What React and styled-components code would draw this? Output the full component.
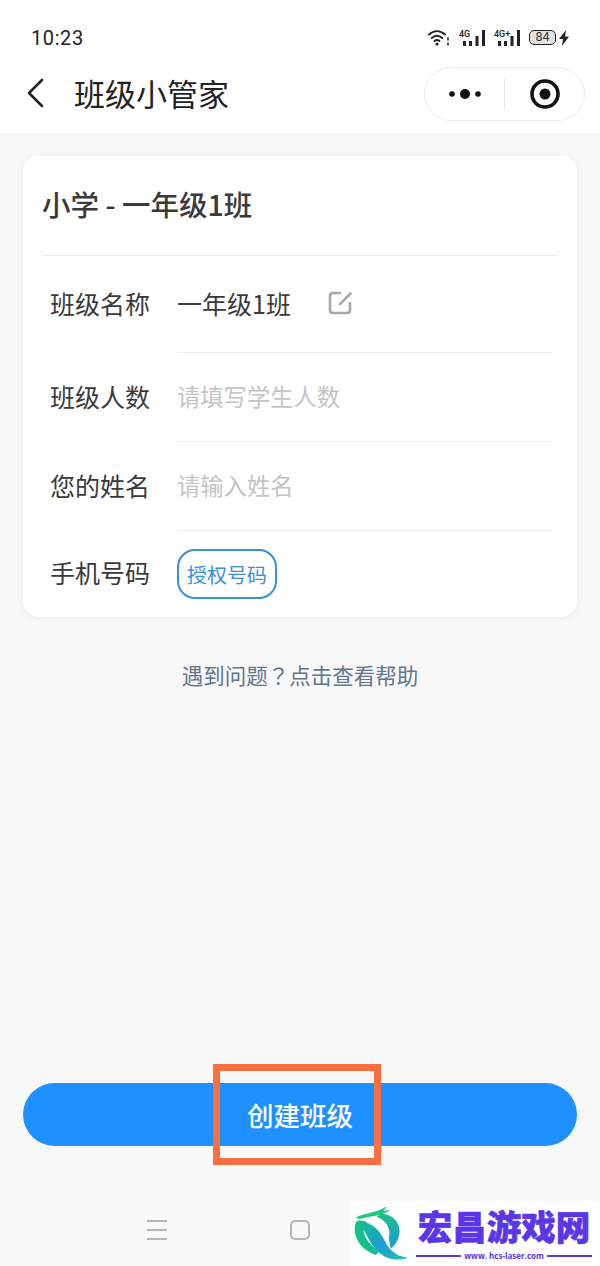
import React from 'react'
import styled, { createGlobalStyle } from 'styled-components'

const CJK = `'Noto Sans CJK SC', 'Noto Sans', sans-serif`

const Global = createGlobalStyle`
  html, body { margin: 0; padding: 0; background: #f8f8f8; }
  * { box-sizing: border-box; }
  body { font-family: ${CJK}; }
`

const Page = styled.div`
  position: relative;
  width: 600px;
  height: 1266px;
  display: flex;
  flex-direction: column;
  background: #f8f8f8;
  overflow: hidden;
`

const Header = styled.header`
  background: #fff;
  height: 133px;
  display: flex;
  flex-direction: column;
`

const StatusBar = styled.div`
  height: 54px;
  padding: 21px 30px 0 31px;
  display: flex;
  align-items: center;
  justify-content: space-between;
`

const Time = styled.span`
  font-family: Roboto, sans-serif;
  font-size: 20px;
  letter-spacing: 0.6px;
  color: #222;
`

const StatusIcons = styled.div`
  display: flex;
  align-items: center;
  gap: 9px;
`

const Signal = styled.div`
  position: relative;
  width: 26px;
  height: 16px;
`

const SignalLabel = styled.span`
  position: absolute;
  left: 0;
  top: 0;
  font-family: Roboto, sans-serif;
  font-size: 9px;
  line-height: 8px;
  font-weight: 500;
  color: #222;
`

const Battery = styled.div`
  display: flex;
  align-items: center;
  gap: 2px;
`

const BatteryBody = styled.div`
  width: 27px;
  height: 15px;
  border: 1.5px solid #222;
  border-radius: 5px;
  background: #e2e2e2;
  font-family: Roboto, sans-serif;
  font-size: 12.5px;
  line-height: 12px;
  color: #333;
  text-align: center;
`

const NavBar = styled.div`
  flex: 1;
  padding: 0 15px 0 24px;
  display: flex;
  align-items: center;
  justify-content: space-between;
`

const NavLeft = styled.div`
  display: flex;
  align-items: center;
  gap: 25px;
  padding-bottom: 2px;
`

const NavTitle = styled.h1`
  margin: 0;
  font-size: 31px;
  font-weight: 400;
  line-height: 40px;
  color: #222;
`

const Capsule = styled.div`
  width: 161px;
  height: 54px;
  border: 1px solid #ececec;
  border-radius: 27px;
  display: flex;
  align-items: center;
`

const CapsuleSide = styled.div`
  flex: 1;
  display: flex;
  align-items: center;
  justify-content: center;
`

const CapsuleDivider = styled.div`
  width: 1px;
  height: 32px;
  background: #e6e6e6;
`

const Main = styled.main`
  flex: 1;
  padding: 23px 23px 0;
  display: flex;
  flex-direction: column;
`

const Card = styled.section`
  height: 461px;
  padding: 0 19px;
  background: #fff;
  border-radius: 16px;
  box-shadow: 0 1px 8px rgba(0, 0, 0, 0.05);
`

const CardTitle = styled.div`
  height: 100px;
  padding-bottom: 4px;
  display: flex;
  align-items: center;
  border-bottom: 1.5px solid #efefef;
  font-size: 28.5px;
  font-weight: 500;
  color: #3a3a3a;
`

const Row = styled.div`
  height: ${p => p.$h}px;
  display: flex;
  align-items: center;
  margin-left: 8px;
  margin-right: 5px;
`

const Label = styled.span`
  width: 127px;
  flex: none;
  padding-bottom: 4px;
  font-size: 25px;
  color: #3a3a3a;
`

const Field = styled.div`
  flex: 1;
  align-self: stretch;
  padding-bottom: ${p => (p.$last ? 0 : 2)}px;
  display: flex;
  align-items: center;
  border-bottom: ${p => (p.$last ? 'none' : '1.5px solid #efefef')};
  font-size: ${p => (p.$placeholder ? 23.3 : 25)}px;
  color: ${p => (p.$placeholder ? '#c4c4c4' : '#3a3a3a')};
`

const EditIcon = styled.svg`
  margin-left: 36px;
  flex: none;
`

const AuthButton = styled.button`
  width: 100px;
  height: 50px;
  padding: 0;
  background: #fff;
  border: 2px solid #3a8fd8;
  border-radius: 18px;
  font-family: ${CJK};
  font-size: 20px;
  color: #3a8fd8;
`

const HelpLink = styled.div`
  margin-top: 42px;
  text-align: center;
  font-size: 21.5px;
  line-height: 32px;
  color: #5f7590;
`

const CenteredMark = styled.span`
  font-family: 'Noto Sans CJK TC', sans-serif;
`

const ActionWrap = styled.div`
  position: relative;
  margin-top: auto;
  margin-bottom: 55px;
`

const CreateButton = styled.button`
  display: block;
  width: 100%;
  height: 63px;
  padding: 0;
  border: none;
  border-radius: 32px;
  background: #1e90ff;
  font-family: ${CJK};
  font-size: 26.5px;
  font-weight: 500;
  color: #fff;
`

const Highlight = styled.div`
  position: absolute;
  left: 190px;
  top: -19px;
  width: 168px;
  height: 101px;
  border: 7px solid #f96f41;
  pointer-events: none;
`

const SystemNav = styled.nav`
  height: 65px;
  padding: 0 0 7px 145px;
  display: flex;
  align-items: center;
  gap: 120px;
`

const Watermark = styled.div`
  position: absolute;
  right: 0;
  bottom: 0;
  width: 250px;
  height: 65px;
  background: #fff;
  display: flex;
`

const BrandCol = styled.div`
  display: flex;
  flex-direction: column;
  align-items: center;
  width: 176px;
  padding-top: 2px;
`

const BrandName = styled.div`
  font-size: 34.5px;
  line-height: 44px;
  font-weight: 900;
  color: #5b35e8;
  white-space: nowrap;
  -webkit-text-stroke: 0.6px #5b35e8;
`

const BrandUrlRow = styled.div`
  width: 100%;
  display: flex;
  align-items: center;
  gap: 3px;
  margin-top: 3px;
`

const BrandRule = styled.div`
  flex: 1;
  height: 2px;
  background: #5b35e8;
`

const BrandUrl = styled.span`
  font-family: 'Open Sans', sans-serif;
  font-size: 8px;
  line-height: 11px;
  font-weight: 700;
  color: #5b35e8;
`

const Bars = () => (
  <svg width="22" height="16" viewBox="0 0 22 16" style={{ position: 'absolute', left: 4, top: 0 }}>
    <g fill="#222">
      <rect x="0" y="11" width="3" height="5" />
      <rect x="6" y="11" width="3" height="5" />
      <rect x="12.500" y="6" width="3" height="10" />
      <rect x="19" y="0" width="3" height="16" />
    </g>
  </svg>
)

const App = () => (
  <Page>
    <Global />
    <Header>
      <StatusBar>
        <Time>10:23</Time>
        <StatusIcons>
          <svg width="22" height="16" viewBox="0 0 22 16" fill="none" stroke="#222" strokeWidth="2" strokeLinecap="round">
            <path d="M1 4.500C6 0 12 0 17 4.500" />
            <path d="M3.800 8C7 5.200 11 5.200 14.200 8" />
            <path d="M6.500 11C8 9.800 10 9.800 11.500 11" />
            <circle cx="9" cy="14" r="1.600" fill="#222" stroke="none" />
            <path d="M20 8V10M20 13V15" strokeWidth="1.500" />
          </svg>
          <Signal>
            <SignalLabel>4G</SignalLabel>
            <Bars />
          </Signal>
          <Signal>
            <SignalLabel>4G+</SignalLabel>
            <Bars />
          </Signal>
          <Battery>
            <BatteryBody>84</BatteryBody>
            <svg width="12" height="16" viewBox="0 0 12 16">
              <path d="M8 0L1 9H5L4 16L11 6.500H7Z" fill="#222" />
            </svg>
          </Battery>
        </StatusIcons>
      </StatusBar>
      <NavBar>
        <NavLeft>
          <svg width="25" height="32" viewBox="0 0 25 32" fill="none" stroke="#222" strokeWidth="2.600" strokeLinecap="round" strokeLinejoin="round">
            <path d="M18 3L5 16L18 29" />
          </svg>
          <NavTitle>班级小管家</NavTitle>
        </NavLeft>
        <Capsule>
          <CapsuleSide>
            <svg width="32" height="12" viewBox="0 0 32 12" fill="#111">
              <circle cx="3" cy="6" r="2.800" />
              <circle cx="16" cy="6" r="5" />
              <circle cx="29" cy="6" r="2.800" />
            </svg>
          </CapsuleSide>
          <CapsuleDivider />
          <CapsuleSide>
            <svg width="32" height="32" viewBox="0 0 32 32">
              <circle cx="16" cy="16" r="13" fill="none" stroke="#111" strokeWidth="3.600" />
              <circle cx="16" cy="16" r="5.500" fill="#111" />
            </svg>
          </CapsuleSide>
        </Capsule>
      </NavBar>
    </Header>

    <Main>
      <Card>
        <CardTitle>小学 - 一年级1班</CardTitle>
        <Row $h={97}>
          <Label>班级名称</Label>
          <Field>
            一年级1班
            <EditIcon width="26" height="26" viewBox="0 0 26 26" fill="none" stroke="#a8a8a8" strokeWidth="2.600" strokeLinecap="round" strokeLinejoin="round">
              <path d="M13 3H6C4 3 3 4 3 6V20C3 22 4 23 6 23H20C22 23 23 22 23 20V13" />
              <path d="M13 14L23.500 3.500" />
            </EditIcon>
          </Field>
        </Row>
        <Row $h={89}>
          <Label>班级人数</Label>
          <Field $placeholder>请填写学生人数</Field>
        </Row>
        <Row $h={89}>
          <Label>您的姓名</Label>
          <Field $placeholder>请输入姓名</Field>
        </Row>
        <Row $h={86}>
          <Label>手机号码</Label>
          <Field $last>
            <AuthButton>授权号码</AuthButton>
          </Field>
        </Row>
      </Card>
      <HelpLink>遇到问题<CenteredMark>？</CenteredMark>点击查看帮助</HelpLink>
      <ActionWrap>
        <CreateButton>创建班级</CreateButton>
        <Highlight />
      </ActionWrap>
    </Main>

    <SystemNav>
      <svg width="24" height="24" viewBox="0 0 24 24" stroke="#b5b5b5" strokeWidth="2">
        <path d="M2 3H22M2 12H22M2 21H22" />
      </svg>
      <svg width="22" height="22" viewBox="0 0 22 22" fill="none" stroke="#b5b5b5" strokeWidth="2">
        <rect x="2" y="2" width="18" height="18" rx="4" />
      </svg>
    </SystemNav>

    <Watermark>
      <svg width="66" height="65" viewBox="0 0 198 195">
        <defs>
          <linearGradient id="ringRight" x1="0" y1="0" x2="0" y2="1">
            <stop offset="0" stopColor="#1cc08a" />
            <stop offset="1" stopColor="#1b96dc" />
          </linearGradient>
          <linearGradient id="ribbon" x1="0" y1="0" x2="1" y2="1">
            <stop offset="0" stopColor="#17c18a" />
            <stop offset="0.55" stopColor="#1b9ed0" />
            <stop offset="1" stopColor="#22c8a8" />
          </linearGradient>
        </defs>
        <path d="M18 50C40 36 70 40 112 16L100 30L122 26L100 38C92 42 60 46 28 54Z" fill="#22c77e" />
        <path d="M92 38C130 38 158 70 146 108C141 124 132 136 122 143L116 110C124 88 112 60 80 47Z" fill="url(#ringRight)" />
        <path d="M20 60C4 90 20 142 78 162L88 150C52 130 34 98 44 70Z" fill="#16bf8c" />
        <path d="M22 58C72 58 92 96 108 126C122 152 146 168 176 170C140 182 108 174 84 152C56 126 48 90 22 58Z" fill="url(#ribbon)" />
        <path d="M48 64C82 74 98 104 112 130C120 146 134 156 150 164" fill="none" stroke="#dff6f6" strokeWidth="2.500" />
      </svg>
      <BrandCol>
        <BrandName>宏昌游戏网</BrandName>
        <BrandUrlRow>
          <BrandRule />
          <BrandUrl>www. hcs-laser.com</BrandUrl>
          <BrandRule />
        </BrandUrlRow>
      </BrandCol>
    </Watermark>
  </Page>
)

export default App
